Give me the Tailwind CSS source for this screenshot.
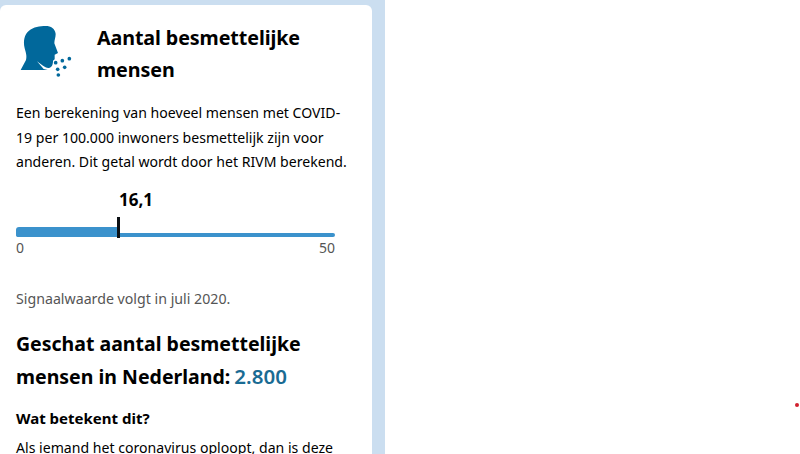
<!DOCTYPE html>
<html lang="nl">
<head>
  <meta charset="UTF-8">
  <title>Aantal besmettelijke mensen</title>
  <script src="https://cdn.jsdelivr.net/npm/@tailwindcss/browser@4"></script>
</head>
<body class="bg-white h-[454px] overflow-hidden font-['Noto_Sans',sans-serif] text-black">
  <div class="w-[385px] h-[454px] bg-[#cbdef0] pt-[5px] pr-[13px] overflow-hidden">
    <div class="bg-white rounded-t-[6px] h-[449px] pl-4 pr-[24px]">
      <!-- kop -->
      <div class="flex pt-[15px]">
        <svg class="w-[60px] h-[60px] shrink-0 -ml-px" viewBox="0 0 180 180" fill="#01689b">
          <path d="M17 150 L33 120 C36 108 33 100 29 85 C24 62 28 44 42 32 C55 21 75 18 92 18 C108 18 120 26 122 42 C122 52 118 60 118 70 L129 99 L119 104 L119 118 L114 122 C114 130 113 139 104 143 C98 146 90 141 84 137 L66 124 L86 147 L98 150 Z"/>
          <circle cx="122" cy="128" r="5.500"/><circle cx="142" cy="122" r="5.500"/><circle cx="163" cy="116" r="5.500"/>
          <circle cx="128" cy="148" r="5.500"/><circle cx="149" cy="142" r="5.500"/><circle cx="130" cy="165" r="5.500"/>
        </svg>
        <h2 class="ml-[22px] mt-[2px] text-[19.7px] leading-[32px] font-bold tracking-[-0.1px]">Aantal besmettelijke mensen</h2>
      </div>
      <p class="mt-[15px] text-[14.100px] leading-[24.500px]">Een berekening van hoeveel mensen met COVID-19 per 100.000 inwoners besmettelijk zijn voor anderen. Dit getal wordt door het RIVM berekend.</p>
      <!-- schaal -->
      <div class="relative mt-[12.500px] h-[80px] w-[319px]">
        <div class="absolute left-[103px] top-0 text-[17px] leading-[26px] font-bold">16,1</div>
        <div class="absolute left-0 right-0 top-[46px] h-[4px] rounded-full bg-[#3b92cc]"></div>
        <div class="absolute left-0 w-[102px] top-[40px] h-[10px] rounded-l-[3px] bg-[#3b92cc]"></div>
        <div class="absolute left-[101px] top-[30px] w-[3px] h-[21px] bg-[#0b1014]"></div>
        <div class="absolute left-0 right-0 top-[51px] flex justify-between text-[14px] leading-[20px] text-[#555]"><span>0</span><span>50</span></div>
      </div>
      <p class="mt-[20px] text-[14.200px] leading-[24px] text-[#555]">Signaalwaarde volgt in juli 2020.</p>
      <h3 class="mt-[17px] text-[19.500px] leading-[32px] font-bold">Geschat aantal besmettelijke mensen in Nederland: <span class="text-[20.500px] font-semibold text-[#1a6b93] -ml-px">2.800</span></h3>
      <h4 class="mt-[13px] text-[15px] leading-[24px] font-bold">Wat betekent dit?</h4>
      <p class="mt-[6px] text-[14.100px] leading-[24.500px]">Als iemand het coronavirus oploopt, dan is deze</p>
    </div>
  </div>
  <div class="absolute left-[795px] top-[403px] w-[4px] h-[4px] rounded-full bg-[#d0202e]"></div>
</body>
</html>
